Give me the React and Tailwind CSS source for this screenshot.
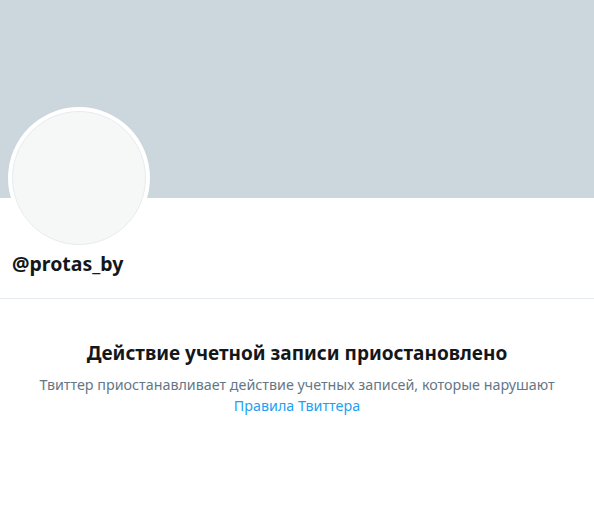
import React from 'react'

const font = { fontFamily: '"Segoe UI", "Noto Sans", "Open Sans", sans-serif' }

export default function App() {
  return (
    <div className="w-[594px] h-[532px] bg-white overflow-hidden" style={font}>
      {/* Баннер */}
      <div className="h-[198px] bg-[#ccd6dd]" />

      {/* Аватар */}
      <div className="-mt-[91px] ml-[8px] w-[142px] h-[142px] rounded-full bg-white p-[4px] relative">
        <div className="w-full h-full rounded-full bg-[#f5f8f7] border border-[#e6ecf0]" />
      </div>

      {/* Имя пользователя */}
      <div className="px-[12px] pt-[3px] pb-[22px] text-[19.5px] leading-[24px] font-bold text-[#14171a]">
        @protas_by
      </div>

      <div className="h-px bg-[#e6ecf0]" />

      {/* Сообщение */}
      <div className="pt-[41px] px-[20px] text-center">
        <h2 className="text-[19px] leading-[26px] font-bold text-[#14171a]">
          Действие учетной записи приостановлено
        </h2>
        <p className="mt-[8px] text-[14.3px] leading-[21px] text-[#657786]">
          Твиттер приостанавливает действие учетных записей, которые нарушают{' '}
          <a href="#" className="text-[#1da1f2]">Правила Твиттера</a>
        </p>
      </div>
    </div>
  )
}
